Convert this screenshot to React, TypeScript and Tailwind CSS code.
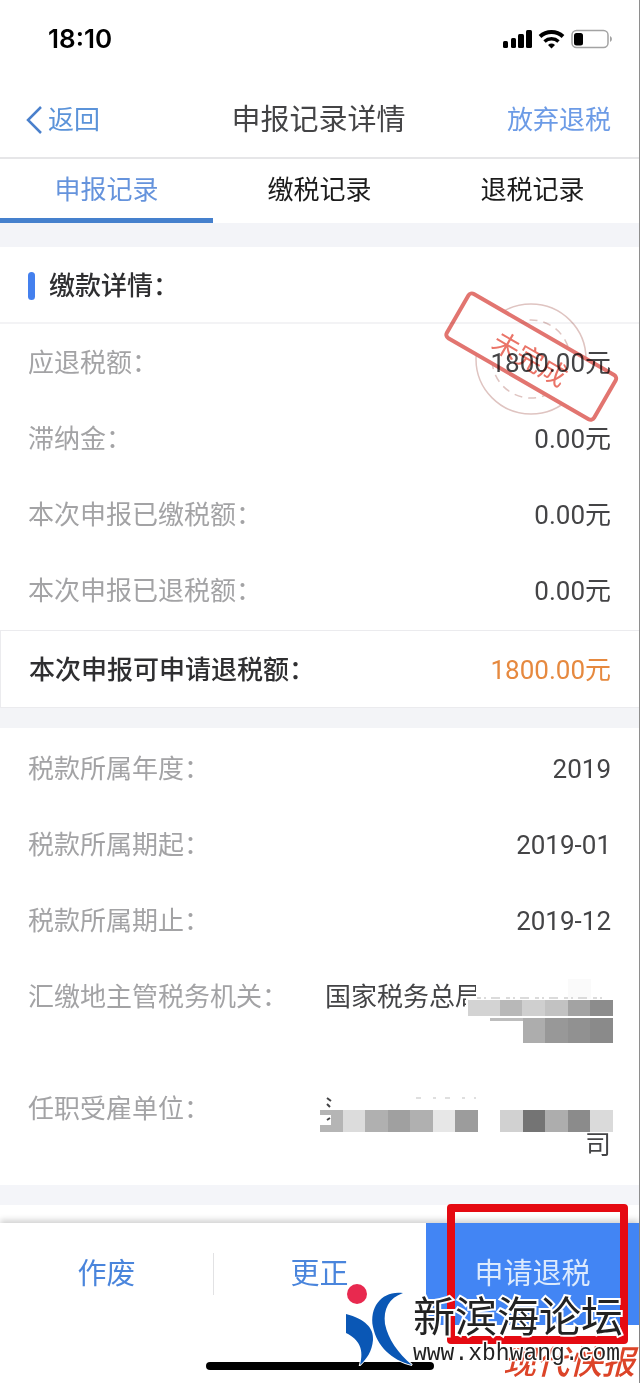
import type { ReactNode } from "react"

const tabs = ["申报记录", "缴税记录", "退税记录"]

const payment = [
    { label: "应退税额：", value: "1800.00元", stamp: true },
    { label: "滞纳金：", value: "0.00元" },
    { label: "本次申报已缴税额：", value: "0.00元" },
    { label: "本次申报已退税额：", value: "0.00元" },
]

const period = [
    { label: "税款所属年度：", value: "2019" },
    { label: "税款所属期起：", value: "2019-01" },
    { label: "税款所属期止：", value: "2019-12" },
]

function StatusBar() {
    return (
        <div className="flex h-20 items-center justify-between pl-12 pr-[26px] pb-[2px]">
            <span className="font-[Inter] text-[26px] font-semibold text-black">18:10</span>
            <svg width="110" height="20" viewBox="0 0 110 20" aria-hidden="true">
                <rect x="0" y="12" width="5" height="7" rx="1.5" />
                <rect x="8" y="9" width="5" height="10" rx="1.5" />
                <rect x="15" y="5" width="6" height="14" rx="1.5" />
                <rect x="23" y="1" width="6" height="18" rx="1.5" />
                <path d="M37 7.5a17 17 0 0 1 23 0" fill="none" stroke="black" strokeWidth="4" />
                <path d="M41.5 12.5a10.500 10.500 0 0 1 14 0" fill="none" stroke="black" strokeWidth="3.500" />
                <path d="M45 16a5.500 5.500 0 0 1 7 0l-3.500 3.500z" />
                <rect x="69" y="1.500" width="36" height="17" rx="4.500" fill="white" stroke="#a3a3a3" strokeWidth="1.500" />
                <rect x="71" y="4" width="9" height="12.500" rx="2.500" />
                <path d="M107 7v6q2-1 2-3t-2-3z" fill="#a3a3a3" />
            </svg>
        </div>
    )
}

function Stamp() {
    return (
        <svg className="pointer-events-none absolute right-4 -top-[37px] mix-blend-multiply" width="184" height="140" viewBox="0 0 184 140" aria-hidden="true">
            <circle cx="92" cy="72" r="55" fill="none" stroke="#dfc4c1" strokeWidth="1.500" />
            <circle cx="92" cy="72" r="39" fill="none" stroke="#dfc4c1" strokeWidth="1.500" strokeDasharray="8 6" />
            <g transform="rotate(30 92 70)">
                <rect x="7" y="44" width="170" height="51" rx="4" fill="white" stroke="#e27570" strokeWidth="4" />
                <text x="92" y="82" textAnchor="middle" fontSize="27" fontWeight="400" fill="#ea7468">未完成</text>
            </g>
        </svg>
    )
}

function Row({ label, children }: { label: string; children: ReactNode }) {
    return (
        <div className="relative flex justify-between px-7 pb-[19px] pt-[21px] leading-9">
            <dt className="text-[#a3a3a5]">{label}</dt>
            <dd className="text-right text-[#444446]">{children}</dd>
        </div>
    )
}

function Block({ x, y, w = 23, h, fill }: { x: number; y: number; w?: number; h: number; fill: string }) {
    return <rect x={x} y={y} width={w} height={h} fill={fill} />
}

function OfficeMosaic() {
    return (
        <svg className="absolute left-0 top-0 overflow-visible" width="288" height="72" viewBox="0 0 288 72" aria-hidden="true">
            <path d="M151 0H288V72H136V28H141V18H151z" fill="white" />
            <Block x={243} y={0} h={20} fill="#fafafa" />
            <path d="M152 19H280" stroke="#cfcfcf" strokeWidth="1.500" strokeDasharray="4 3 2 5 9 6" />
            <Block x={143} y={21} w={32} h={16} fill="#d3d3d3" />
            <Block x={175} y={21} h={16} fill="#b8b8b8" />
            <Block x={197} y={21} h={16} fill="#cfcfcf" />
            <Block x={220} y={21} h={16} fill="#c2c2c2" />
            <Block x={243} y={21} h={16} fill="#a3a3a3" />
            <Block x={265} y={21} h={16} fill="#8c8c8c" />
            <Block x={165} y={39} w={33} h={3} fill="#bdbdbd" />
            <Block x={198} y={39} h={25} fill="#adadad" />
            <Block x={220} y={39} h={25} fill="#989898" />
            <Block x={243} y={39} h={25} fill="#919191" />
            <Block x={265} y={39} h={25} fill="#8a8a8a" />
        </svg>
    )
}

function EmployerMosaic() {
    const fills = ["#b5b5b5", "#dcdcdc", "#b0b0b0", "#a0a0a0", "#b0b0b0", "#e7e7e7", "#9c9c9c", "#ffffff", "#d1d1d1", "#747474", "#adadad", "#8b8b8b", "#dadada"]
    return (
        <svg className="absolute -left-[5px] top-0 overflow-visible" width="293" height="42" viewBox="0 0 293 42" aria-hidden="true">
            {fills.map((fill, i) => (
                <Block key={i} x={Math.round(i * 22.5)} y={19} h={22} fill={fill} />
            ))}
            <path d="M0 24h11v10H0z" fill="white" />
            <path d="M7 7l4 3M7 13l3 3M7 29l3-2" stroke="#444446" strokeWidth="2" />
            <path d="M96 7H156" stroke="#d5d5d5" strokeWidth="1.500" strokeDasharray="5 12 3 9" />
        </svg>
    )
}

function Watermark() {
    return (
        <div className="pointer-events-none absolute right-4 top-[57px] flex">
            <svg className="mt-1" width="68" height="82" viewBox="0 0 68 82" aria-hidden="true">
                <g stroke="white" strokeWidth="2" paintOrder="stroke">
                    <circle cx="12" cy="10" r="10" fill="#e8294f" />
                    <path d="M1 30C20 35 29 44 28 56C27 67 22 75 15 81C19 66 15 56 1 49z" fill="#0a57b5" />
                    <path d="M58 9C38 6 24 22 28 43C32 62 46 76 67 81C53 69 43 55 40 40C38 25 44 14 58 9z" fill="#0a57b5" />
                </g>
            </svg>
            <div className="pt-4 text-[#222222]">
                <p className="text-[42px] leading-[44px] [-webkit-text-stroke:4px_white] [paint-order:stroke_fill]">新滨海论坛</p>
                <p className="font-['Liberation_Mono',monospace] text-[23px] leading-7 [-webkit-text-stroke:3px_white] [paint-order:stroke_fill]">www.xbhwang.com</p>
            </div>
        </div>
    )
}

export default function App() {
    return (
        <main className="border-r border-[#8e8e8e] bg-white font-[Roboto,'Noto_Sans_CJK_SC',sans-serif] text-[26px] leading-9">
            <StatusBar />
            <header className="flex items-center justify-between border-b-2 border-[#e6e6e8] pl-[26px] pr-7 pt-[2px] h-[79px]">
                <button type="button" className="flex flex-1 items-center gap-[6px] text-[#5b93d9]">
                    <svg width="16" height="28" viewBox="0 0 16 28" fill="none" stroke="#4a80cc" strokeWidth="2.500" aria-hidden="true">
                        <path d="M15 1L2 14L15 27" />
                    </svg>
                    返回
                </button>
                <h1 className="text-[29px] text-[#444446]">申报记录详情</h1>
                <button type="button" className="flex-1 text-right text-[#6c9be6]">放弃退税</button>
            </header>
            <nav className="flex h-16">
                {tabs.map((tab, i) => (
                    <button
                        key={tab}
                        type="button"
                        className={i === 0 ? "flex-1 border-b-[5px] border-[#4580cd] pt-[2px] text-[#6593dc]" : "flex-1 border-b-[5px] border-transparent pt-[2px] text-[#1c1c1c]"}
                    >
                        {tab}
                    </button>
                ))}
            </nav>
            <div className="h-6 bg-[#f3f4f8]" />

            <section>
                <h2 className="flex h-[77px] items-center gap-[14px] border-b-2 border-[#f3f3f5] px-7 pt-[2px] font-medium text-[#2f2f31]">
                    <span className="h-7 w-[7px] rounded-full bg-[#4480ee]" />
                    缴款详情：
                </h2>
                <dl className="pb-[2px]">
                    {payment.map((item) => (
                        <Row key={item.label} label={item.label}>
                            {item.value}
                            {item.stamp && <Stamp />}
                        </Row>
                    ))}
                </dl>
                <dl className="flex h-[78px] items-center justify-between border border-r-0 border-[#ebebee] px-7 pt-[2px]">
                    <dt className="font-medium text-[#2f2f31]">本次申报可申请退税额：</dt>
                    <dd className="text-[#e6893f]">1800.00元</dd>
                </dl>
            </section>
            <div className="h-5 bg-[#f3f4f7]" />

            <dl className="pb-[3px] pt-[2px]">
                {period.map((item) => (
                    <Row key={item.label} label={item.label}>{item.value}</Row>
                ))}
                <Row label="汇缴地主管税务机关：">
                    <div className="relative h-[72px] w-[286px] text-left">
                        国家税务总局
                        <OfficeMosaic />
                    </div>
                </Row>
                <Row label="任职受雇单位：">
                    <div className="relative flex h-[72px] w-[286px] items-end justify-end">
                        司
                        <EmployerMosaic />
                    </div>
                </Row>
            </dl>
            <div className="h-5 bg-[#f4f5f9]" />

            <footer className="relative mt-[18px] bg-white shadow-[0_-3px_6px_rgba(0,0,0,0.18)]">
                <div className="flex h-[102px] items-center text-[29px] text-[#4a85dc]">
                    <button type="button" className="flex-1">作废</button>
                    <span className="-mr-px h-[42px] w-px bg-[#e2e2e4]" />
                    <button type="button" className="flex-1">更正</button>
                    <button type="button" className="h-full flex-1 bg-[#4285f4] text-[#dceafd]">申请退税</button>
                </div>
                <div className="flex h-[58px] justify-center pt-[37px]">
                    <div className="h-2 w-[228px] rounded-full bg-black" />
                </div>
                <div className="pointer-events-none absolute -top-[19px] right-[11px] h-[140px] w-[181px] rounded border-8 border-[#e50a12]" />
                <p className="pointer-events-none absolute bottom-0 right-1 text-[33px] font-medium italic leading-10 text-[#dc4428]">现代快报</p>
                <Watermark />
            </footer>
        </main>
    )
}
